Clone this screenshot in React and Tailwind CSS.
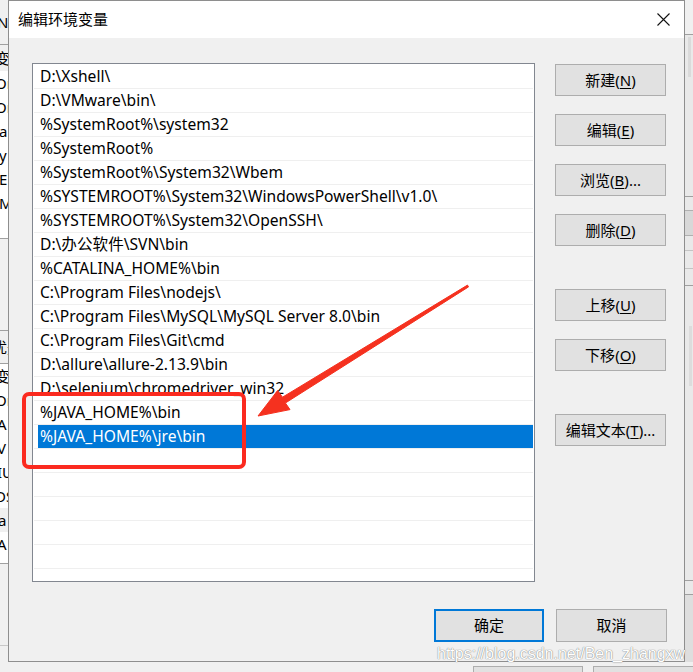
import React from "react";

const paths = [
  "D:\\Xshell\\",
  "D:\\VMware\\bin\\",
  "%SystemRoot%\\system32",
  "%SystemRoot%",
  "%SystemRoot%\\System32\\Wbem",
  "%SYSTEMROOT%\\System32\\WindowsPowerShell\\v1.0\\",
  "%SYSTEMROOT%\\System32\\OpenSSH\\",
  "D:\\办公软件\\SVN\\bin",
  "%CATALINA_HOME%\\bin",
  "C:\\Program Files\\nodejs\\",
  "C:\\Program Files\\MySQL\\MySQL Server 8.0\\bin",
  "C:\\Program Files\\Git\\cmd",
  "D:\\allure\\allure-2.13.9\\bin",
  "D:\\selenium\\chromedriver_win32",
  "%JAVA_HOME%\\bin",
  "%JAVA_HOME%\\jre\\bin",
  "",
  "",
  "",
  "",
  "",
  "",
];

const SELECTED = 15;

function WinButton({ label, keyChar, suffix = "", className = "" }) {
  return (
    <div
      className={`h-[32px] w-[111px] flex items-center justify-center bg-[#e1e1e1] border border-[#adadad] text-[15px] text-black ${className}`}
    >
      <span>
        {label}(<u className="underline-offset-2">{keyChar}</u>){suffix}
      </span>
    </div>
  );
}

function LeftStrip() {
  // piece of the window behind the dialog
  return (
    <div className="w-[8px] h-full overflow-hidden flex flex-col text-[15px] leading-[24px] text-black bg-[#f0f0f0]">
      <div className="h-[44px] pt-[10px] whitespace-nowrap -ml-[3px]">N</div>
      <div className="h-[194px] bg-white border-t border-[#a0a0a0] flex flex-col whitespace-nowrap -ml-[5px]">
        <div className="h-[26px] bg-[#f0f0f0] pt-[1px]">变量</div>
        <div>Or</div>
        <div>Or</div>
        <div className="pl-[4px]">a</div>
        <div className="pl-[4px]">y</div>
        <div className="pl-[4px]">E</div>
        <div className="pl-[4px]">M</div>
      </div>
      <div className="h-[92px] border-t border-[#a0a0a0]"></div>
      <div className="h-[33px] border-t border-[#a0a0a0] pt-[4px] -ml-[8px] whitespace-nowrap">优先</div>
      <div className="h-[200px] bg-white border-t border-[#a0a0a0] flex flex-col whitespace-nowrap -ml-[5px]">
        <div>变量</div>
        <div>Or</div>
        <div className="pl-[2px]">A</div>
        <div className="pl-[2px]">V</div>
        <div className="pl-[2px]">IU</div>
        <div>DS</div>
        <div className="bg-[#f0f0f0] pl-[3px]">a</div>
        <div className="pl-[2px]">A</div>
      </div>
      <div className="h-[82px] border-t border-[#a0a0a0]"></div>
      <div className="flex-1 border-t border-[#c8c8c8]"></div>
    </div>
  );
}

function RightStrip() {
  return (
    <div className="w-[8px] h-full flex flex-col bg-[#e9e9e9]">
      <div className="h-[35px] bg-[#f0f0f0] border-b border-[#a0a0a0]"></div>
      <div className="h-[161px] flex">
        <div className="w-[3px]"></div>
        <div className="w-[3px] bg-[#dadada] h-[40px] mt-[2px]"></div>
      </div>
      <div className="h-[14px] border-t border-[#a0a0a0]"></div>
      <div className="h-[25px] border-t border-[#b0b0b0] bg-[#d8d8d8]"></div>
      <div className="h-[15px] border-t border-[#b0b0b0]"></div>
      <div className="h-[18px] border-t border-[#c4c4c4]"></div>
      <div className="h-[17px] border-t border-[#c4c4c4]"></div>
      <div className="h-[295px] border-t border-[#a0a0a0] flex">
        <div className="w-[4px]"></div>
        <div className="w-[3px] bg-[#dcdcdc] h-[60px] mt-[40px]"></div>
      </div>
      <div className="h-[14px] border-t border-[#a0a0a0]"></div>
      <div className="flex-1 border-t border-[#a0a0a0] bg-[#dedede]"></div>
    </div>
  );
}

function Annotations() {
  return (
    <svg
      className="absolute left-0 top-0 pointer-events-none"
      width="693"
      height="672"
      viewBox="0 0 693 672"
    >
      <rect
        x="24"
        y="394"
        width="220"
        height="73"
        rx="5"
        fill="none"
        stroke="#fb2a1f"
        strokeWidth="4"
      />
      <polygon
        points="467.5,285.1 282.5,397.2 277.6,390.5 258,416 290,409.6 285.4,403 468.5,286.9"
        fill="#f5311f"
        stroke="#f5311f"
        strokeWidth="1"
        strokeLinejoin="round"
      />
    </svg>
  );
}

export default function App() {
  return (
    <div className="relative w-[693px] h-[672px] overflow-hidden bg-[#f0f0f0] font-['Noto_Sans','Noto_Sans_CJK_SC',sans-serif]">
      <div className="flex h-[662px]">
        <LeftStrip />

        {/* dialog */}
        <div className="w-[677px] h-full flex flex-col border border-[#8e8e8e]">
          <div className="h-[37px] bg-white flex items-center justify-between pl-[9px] pr-[14px]">
            <span className="text-[15px] text-black font-['Noto_Sans_CJK_SC',sans-serif]">编辑环境变量</span>
            <svg width="13" height="13" viewBox="0 0 13 13">
              <path d="M0.5 0.5 L12.5 12.5 M12.5 0.5 L0.5 12.5" stroke="#111" strokeWidth="1.1" fill="none" />
            </svg>
          </div>

          <div className="flex-1 bg-[#f0f0f0] flex flex-col pt-[25px] pl-[23px] pr-[17px]">
            <div className="flex">
              <div className="w-[503px] h-[519px] bg-white border border-[#828790] pt-[1px] overflow-hidden">
                {paths.map((p, i) => (
                  <div
                    key={i}
                    className="h-[24px] mx-[1px] border-b border-[#efefef] flex text-[15.6px] text-black"
                  >
                    <div
                      className={`flex-1 ml-[4px] pl-[2px] flex items-center whitespace-nowrap ${
                        i === SELECTED ? "bg-[#0078d7] text-white" : ""
                      }`}
                    >
                      {p}
                    </div>
                  </div>
                ))}
              </div>

              <div className="ml-[20px] pt-[1px] flex flex-col">
                <WinButton label="新建" keyChar="N" />
                <WinButton label="编辑" keyChar="E" className="mt-[18px]" />
                <WinButton label="浏览" keyChar="B" suffix="..." className="mt-[18px]" />
                <WinButton label="删除" keyChar="D" className="mt-[18px]" />
                <WinButton label="上移" keyChar="U" className="mt-[43px]" />
                <WinButton label="下移" keyChar="O" className="mt-[18px]" />
                <WinButton label="编辑文本" keyChar="T" suffix="..." className="mt-[43px]" />
              </div>
            </div>

            <div className="mt-[27px] flex justify-end gap-[12px]">
              <div className="h-[33px] w-[110px] flex items-center justify-center bg-[#e1e1e1] border-2 border-[#0078d7] text-[15px] text-black">
                确定
              </div>
              <div className="h-[33px] w-[111px] flex items-center justify-center bg-[#e1e1e1] border border-[#adadad] text-[15px] text-black">
                取消
              </div>
            </div>
          </div>
        </div>

        <RightStrip />
      </div>

      {/* window behind, bottom edge */}
      <div className="h-[10px] flex pt-[4px] bg-[#f0f0f0]">
        <div className="ml-[473px] w-[110px] border border-b-0 border-[#adadad] bg-[#e1e1e1]"></div>
        <div className="ml-[10px] flex-1 border border-b-0 border-r-0 border-[#adadad] bg-[#e1e1e1]"></div>
      </div>

      <div className="absolute left-[437px] top-[644px] text-[16px] leading-[20px] font-['Liberation_Sans',Arial,sans-serif] text-white [text-shadow:0_0_1px_#7a7a7a,0_0_1px_#9a9a9a] whitespace-nowrap pointer-events-none">
        https://blog.csdn.net/Ben_zhangxw
      </div>

      <Annotations />
    </div>
  );
}
